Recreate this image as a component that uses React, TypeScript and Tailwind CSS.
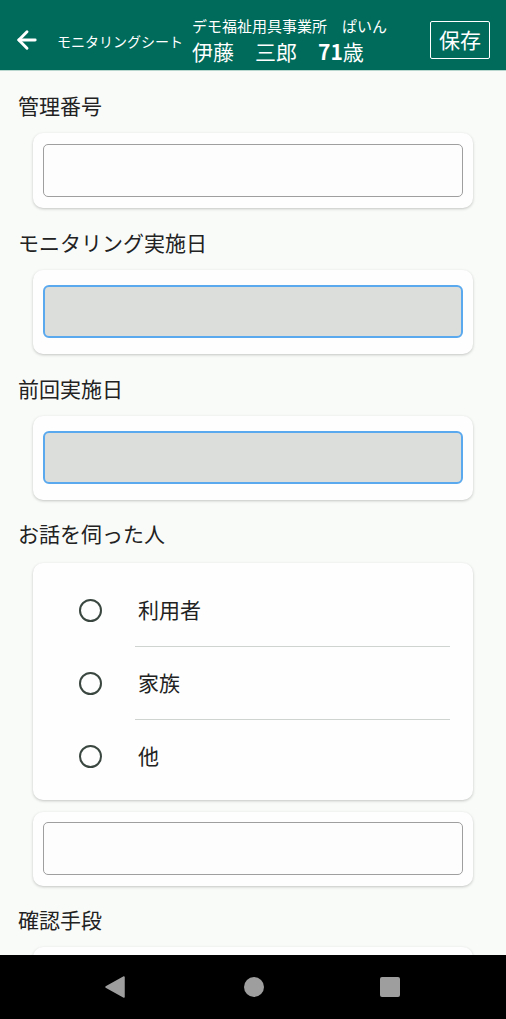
import { ArrowLeft } from 'lucide-react'

const font = { fontFamily: '"Noto Sans CJK JP", "Noto Sans", sans-serif' }

function Label({ text }: { text: string }) {
  return <div className="px-[18px] h-[28px] leading-[28px] text-[21px] text-[#222]">{text}</div>
}

function Card({ children, className }: { children: React.ReactNode; className?: string }) {
  return (
    <div className={`mx-[33px] rounded-[10px] bg-[#fdfefd] shadow-[0_1px_3px_rgba(0,0,0,0.22)] ${className ?? ''}`}>
      {children}
    </div>
  )
}

function TextBox() {
  return <div className="h-[53px] rounded-[5px] border-[1.5px] border-[#9f9f9f] bg-[#fcfdfc]" />
}

function DateBox() {
  return <div className="h-[53px] rounded-[6px] border-2 border-[#5aa9ef] bg-[#dcdedb]" />
}

const options = ['利用者', '家族', '他']

export default function App() {
  return (
    <div className="h-[1019px] flex flex-col overflow-hidden bg-[#f9fbf9]" style={font}>
      {/* Header */}
      <div className="h-[71px] shrink-0 pt-[10px] bg-[#006b5b] border-b border-[#b9d6cf] flex items-center text-white">
        <ArrowLeft className="ml-[13px] w-[28px] h-[28px]" strokeWidth={2.5} />
        <div className="ml-[16px] text-[14px] mt-[2px]">モニタリングシート</div>
        <div className="ml-[9px] flex flex-col">
          <div className="text-[15px] leading-[20px]">デモ福祉用具事業所　ぱいん</div>
          <div className="text-[21px] leading-[28px] mt-[1px]">
            伊藤　三郎　<span className="font-bold">71</span>歳
          </div>
        </div>
        <div className="ml-auto mr-[16px] w-[60px] h-[38px] border border-white rounded-[2px] flex items-center justify-center text-[21px]">
          保存
        </div>
      </div>

      {/* Content */}
      <div className="flex-1 overflow-hidden">
        <div className="pt-[20px]">
          <Label text="管理番号" />
        </div>
        <Card className="mt-[14px] px-[10px] py-[11px]">
          <TextBox />
        </Card>

        <div className="pt-[20px]">
          <Label text="モニタリング実施日" />
        </div>
        <Card className="mt-[14px] px-[10px] pt-[15px] pb-[16px]">
          <DateBox />
        </Card>

        <div className="pt-[20px]">
          <Label text="前回実施日" />
        </div>
        <Card className="mt-[14px] px-[10px] pt-[15px] pb-[16px]">
          <DateBox />
        </Card>

        <div className="pt-[19px]">
          <Label text="お話を伺った人" />
        </div>
        <Card className="mt-[16px] pt-[11px] pb-[8px]">
          {options.map((o, i) => (
            <div key={o}>
              <div className="h-[72px] flex items-center">
                <div className="ml-[46px] w-[23px] h-[23px] rounded-full border-[2.5px] border-[#3a4640]" />
                <div className="ml-[36px] text-[21px] text-[#222]">{o}</div>
              </div>
              {i < options.length - 1 && <div className="ml-[102px] mr-[23px] h-px bg-[#cfd4d1]" />}
            </div>
          ))}
        </Card>

        <Card className="mt-[12px] px-[10px] pt-[10px] pb-[11px]">
          <TextBox />
        </Card>

        <div className="pt-[19px]">
          <Label text="確認手段" />
        </div>
        <Card className="mt-[14px] h-[60px]">
          <div />
        </Card>
      </div>

      {/* Android nav bar */}
      <div className="h-[64px] shrink-0 bg-black flex items-center">
        <svg className="ml-[105px]" width="20" height="22" viewBox="0 0 20 22">
          <path d="M19 1 L19 21 L1 11 Z" fill="#9e9e9e" stroke="#9e9e9e" strokeLinejoin="round" strokeWidth="1.5" />
        </svg>
        <div className="ml-[119px] w-[20px] h-[20px] rounded-full bg-[#9e9e9e]" />
        <div className="ml-[116px] w-[20px] h-[20px] rounded-[2px] bg-[#9e9e9e]" />
      </div>
    </div>
  )
}
